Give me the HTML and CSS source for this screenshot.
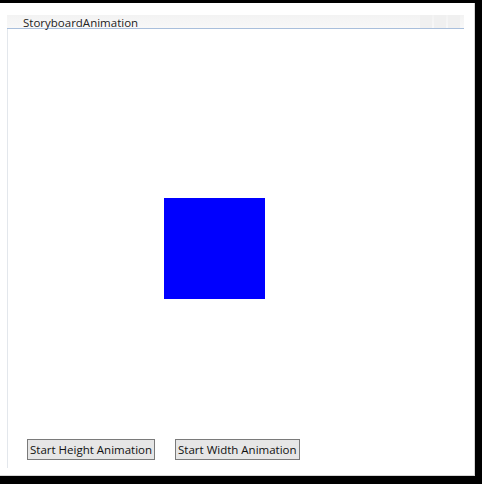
FILE: index.html
```html
<!DOCTYPE html>
<html>
<head>
<meta charset="utf-8">
<link rel="stylesheet" href="styles.css">
</head>
<body>
<div class="panel">
  <div class="window">
    <div class="titlebar">
      <span class="title">StoryboardAnimation</span>
      <div class="caption-btns"><span></span><span></span><span></span></div>
    </div>
    <div class="content">
      <div class="stage">
        <div class="square"></div>
      </div>
      <div class="buttons">
        <button class="btn">Start Height Animation</button>
        <button class="btn">Start Width Animation</button>
      </div>
    </div>
  </div>
</div>
</body>
</html>
```
FILE: styles.css
```css
html, body {
  margin: 0;
  padding: 0;
  background: #000;
}
body {
  width: 482px;
  height: 484px;
  padding-top: 3px;
  box-sizing: border-box;
  font-family: "Open Sans", "Noto Sans", sans-serif;
}
.panel {
  width: 475px;
  height: 473px;
  background: #fff;
  box-sizing: border-box;
  border-right: 1px solid #d6d6d6;
  border-bottom: 1px solid #d6d6d6;
  padding: 12px 0 0 7px;
  box-shadow: inset -2px -2px 0 #fff;
}
.window {
  width: 457px;
}
.titlebar {
  height: 13px;
  background: linear-gradient(#f3f3f3, #f8f8f8);
  border-bottom: 1px solid #a9bfdc;
  display: flex;
  align-items: flex-end;
  justify-content: space-between;
}
.title {
  font-size: 11.5px;
  line-height: 13px;
  color: #222;
  margin-left: 16px;
  position: relative;
  top: 1px;
}
.caption-btns {
  display: flex;
  gap: 2px;
  height: 13px;
  margin-right: 4px;
}
.caption-btns span {
  width: 12px;
  background: #f0f0f0;
}
.content {
  border-left: 1px solid #e3e7ec;
  height: 439px;
  display: flex;
  flex-direction: column;
}
.stage {
  flex: 1;
}
.square {
  width: 101px;
  height: 101px;
  background: #0000ff;
  margin: 169px 0 0 156px;
}
.buttons {
  display: flex;
  gap: 20px;
  padding-left: 19px;
  margin-bottom: 8px;
}
.btn {
  font-family: "Open Sans", "Noto Sans", sans-serif;
  font-size: 11.5px;
  height: 21px;
  padding: 0 2px;
  margin: 0;
  background: #e6e6e6;
  border: 1px solid #7a7a7a;
  border-radius: 0;
  color: #111;
  line-height: 19px;
}
```
